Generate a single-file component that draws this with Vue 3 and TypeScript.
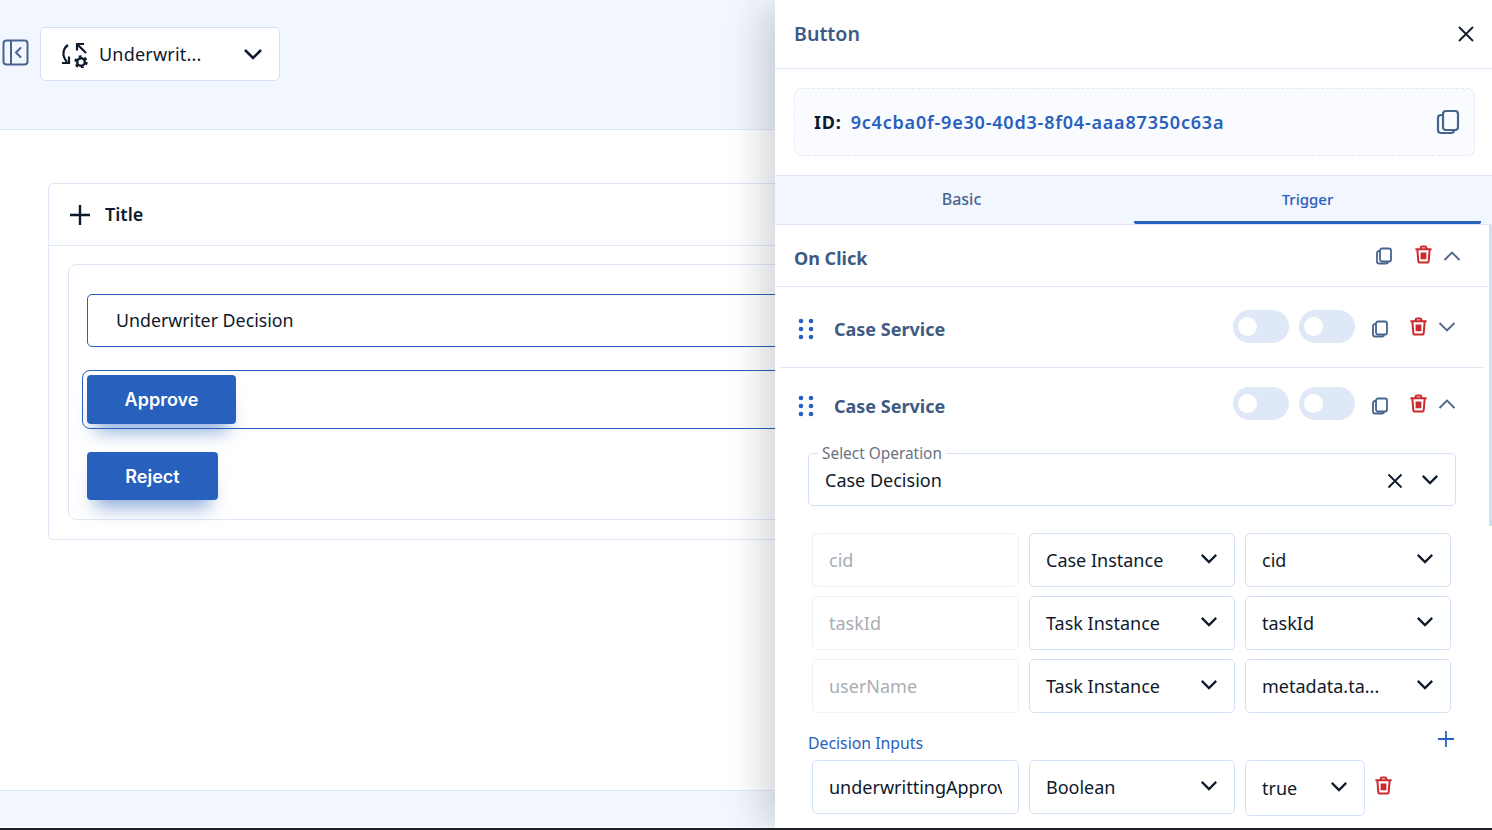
<template>
  <div class="page">
    <header class="topbar">
      <svg class="side-icon" width="30" height="30" viewBox="0 0 30 30" fill="none" stroke="#47648f" stroke-width="2">
        <rect x="3.500" y="3.500" width="24" height="24" rx="3" />
        <path d="M11 3.500v24" />
        <path d="M20.500 11 16 15.500l4.500 4.500" stroke-linecap="round" stroke-linejoin="round" />
      </svg>
      <button class="flow-select">
        <svg width="30" height="28" viewBox="0 0 30 28" fill="none" stroke="#0e1a2b" stroke-width="2.200">
          <path d="M9 5C4.500 8 2 15 8 22" />
          <path d="M3 23h7v-6.500" />
          <path d="M18 4 27 13M18 10.500V4h7" />
          <circle cx="22" cy="22" r="3.800" stroke-width="2.400" />
          <circle cx="22" cy="22" r="5.600" stroke-width="2.200" stroke-dasharray="2.900 2.960" />
        </svg>
        <span class="flow-name">Underwrit...</span>
        <svg class="chev-dark" width="20" height="12" viewBox="0 0 20 12"><path d="M2 2l8 8 8-8" /></svg>
      </button>
    </header>

    <main class="canvas">
      <section class="card">
        <div class="card-head">
          <svg width="22" height="22" viewBox="0 0 22 22" stroke="#0e1a2b" stroke-width="2.400"><path d="M11 1v20M1 11h20" /></svg>
          <span>Title</span>
        </div>
        <div class="card-body">
          <div class="form-box">
            <div class="text-field">Underwriter Decision</div>
            <div class="selected-wrap"><button class="btn btn-approve">Approve</button></div>
            <button class="btn btn-reject">Reject</button>
          </div>
        </div>
      </section>
    </main>

    <footer class="footbar"></footer>

    <aside class="panel">
      <div class="panel-head">
        <h2>Button</h2>
        <svg width="18" height="18" viewBox="0 0 18 18" stroke="#0e1a2b" stroke-width="1.800"><path d="M2 2l14 14M16 2 2 16" /></svg>
      </div>

      <div class="id-wrap">
        <div class="id-box">
          <b>ID:</b>
          <span class="id-val">{{ elementId }}</span>
          <svg class="copy-lg" width="24" height="26" viewBox="0 0 24 26" fill="none" stroke="#47648f" stroke-width="2.200">
            <rect x="7" y="2" width="15" height="19" rx="3" />
            <path d="M7 6H5a3 3 0 0 0-3 3v12a3 3 0 0 0 3 3h10a3 3 0 0 0 3-3" />
          </svg>
        </div>
      </div>

      <div class="tabs">
        <div class="tab tab-basic">Basic</div>
        <div class="tab active">Trigger</div>
      </div>

      <div class="scroll">
        <div class="scrollbar"></div>

        <div class="onclick-row">
          <span class="onclick-title">On Click</span>
          <div class="actions">
            <svg class="copy" viewBox="0 0 18 18" fill="none"><rect x="5" y="1.500" width="11" height="13" rx="2" /><path d="M5 4H4a2 2 0 0 0-2 2v8.500a2 2 0 0 0 2 2h7a2 2 0 0 0 2-2" /></svg>
            <svg class="trash" viewBox="0 0 20 20" fill="none"><path d="M1.500 4.500h17M7 4.500V3a1.500 1.500 0 0 1 1.500-1.500h3A1.500 1.500 0 0 1 13 3v1.500M3.500 4.500l1 12a2 2 0 0 0 2 2h7a2 2 0 0 0 2-2l1-12M8 8v7M12 8v7M10 8v7" /></svg>
            <svg class="chev-soft" viewBox="0 0 18 10"><path d="M1.500 9 9 1.500 16.500 9" /></svg>
          </div>
        </div>

        <div v-for="(svc, i) in services" :key="i" class="svc-row" :class="{ open: svc.open }">
          <svg class="dots" width="16" height="22" viewBox="0 0 16 22" fill="#2860bd">
            <circle v-for="d in dotPoints" :key="d[0] + '-' + d[1]" :cx="d[0]" :cy="d[1]" r="2.300" />
          </svg>
          <span class="svc-title">Case Service</span>
          <div class="toggles">
            <span class="toggle"><i></i></span>
            <span class="toggle"><i></i></span>
          </div>
          <div class="actions svc-actions">
            <svg class="copy" viewBox="0 0 18 18" fill="none"><rect x="5" y="1.500" width="11" height="13" rx="2" /><path d="M5 4H4a2 2 0 0 0-2 2v8.500a2 2 0 0 0 2 2h7a2 2 0 0 0 2-2" /></svg>
            <svg class="trash" viewBox="0 0 20 20" fill="none"><path d="M1.500 4.500h17M7 4.500V3a1.500 1.500 0 0 1 1.500-1.500h3A1.500 1.500 0 0 1 13 3v1.500M3.500 4.500l1 12a2 2 0 0 0 2 2h7a2 2 0 0 0 2-2l1-12M8 8v7M12 8v7M10 8v7" /></svg>
            <svg class="chev-soft" viewBox="0 0 18 10"><path :d="svc.open ? 'M1.500 9 9 1.500 16.500 9' : 'M1.500 1 9 8.500 16.500 1'" /></svg>
          </div>
        </div>

        <fieldset class="op-field">
          <legend>Select Operation</legend>
          <span>Case Decision</span>
          <svg width="16" height="16" viewBox="0 0 16 16" stroke="#0e1a2b" stroke-width="1.800"><path d="M1.500 1.500l13 13M14.500 1.500l-13 13" /></svg>
          <svg class="chev-dark" width="18" height="11" viewBox="0 0 20 12"><path d="M2 2l8 8 8-8" /></svg>
        </fieldset>

        <div class="param-grid">
          <template v-for="p in params" :key="p.name">
            <div class="cell ghost">{{ p.name }}</div>
            <div class="cell">
              <span>{{ p.source }}</span>
              <svg class="chev-dark" width="18" height="11" viewBox="0 0 20 12"><path d="M2 2l8 8 8-8" /></svg>
            </div>
            <div class="cell">
              <span>{{ p.field }}</span>
              <svg class="chev-dark" width="18" height="11" viewBox="0 0 20 12"><path d="M2 2l8 8 8-8" /></svg>
            </div>
          </template>
        </div>

        <div class="inputs-head">
          <span>Decision Inputs</span>
          <svg width="18" height="18" viewBox="0 0 18 18" stroke="#2860bd" stroke-width="1.800"><path d="M9 1v16M1 9h16" /></svg>
        </div>

        <div class="input-row">
          <div class="cell clip"><span>underwrittingApproval</span></div>
          <div class="cell">
            <span>Boolean</span>
            <svg class="chev-dark" width="18" height="11" viewBox="0 0 20 12"><path d="M2 2l8 8 8-8" /></svg>
          </div>
          <div class="cell cell-short">
            <span>true</span>
            <svg class="chev-dark" width="18" height="11" viewBox="0 0 20 12"><path d="M2 2l8 8 8-8" /></svg>
          </div>
          <svg class="trash" viewBox="0 0 20 20" fill="none"><path d="M1.500 4.500h17M7 4.500V3a1.500 1.500 0 0 1 1.500-1.500h3A1.500 1.500 0 0 1 13 3v1.500M3.500 4.500l1 12a2 2 0 0 0 2 2h7a2 2 0 0 0 2-2l1-12M8 8v7M12 8v7M10 8v7" /></svg>
        </div>
      </div>
    </aside>
    <div class="screen-edge"></div>
  </div>
</template>

<script setup lang="ts">
const elementId = '9c4cba0f-9e30-40d3-8f04-aaa87350c63a';

const services = [{ open: false }, { open: true }];

const dotPoints: number[][] = [
  [3, 3], [13, 3],
  [3, 11], [13, 11],
  [3, 19], [13, 19],
];

const params = [
  { name: 'cid', source: 'Case Instance', field: 'cid' },
  { name: 'taskId', source: 'Task Instance', field: 'taskId' },
  { name: 'userName', source: 'Task Instance', field: 'metadata.ta...' },
];
</script>

<style>
html, body { margin: 0; background: #fff; overflow: hidden; }
</style>

<style scoped>
.page {
  --ui: "Noto Sans", "Liberation Sans", sans-serif;
  position: relative;
  width: 1492px;
  height: 830px;
  display: flex;
  flex-direction: column;
  overflow: hidden;
  font-family: var(--ui);
  color: #0e1a2b;
  background: #fff;
}
svg { display: block; flex: none; }

.topbar {
  flex: none;
  box-sizing: content-box;
  background: #f2f6fe;
  border-bottom: 1px solid #dfe8f6;
  display: flex;
  align-items: flex-start;
  padding-top: 27px;
  height: 102px;
  gap: 10px;
}
.side-icon { margin: 10px 0 0 0; }
.flow-select {
  width: 240px;
  height: 54px;
  box-sizing: border-box;
  background: #fff;
  border: 1px solid #d3e1f6;
  border-radius: 5px;
  display: flex;
  align-items: center;
  padding: 0 16px 0 18px;
  font: 18px var(--ui);
  letter-spacing: .2px;
  color: #0e1a2b;
}
.flow-name { margin-left: 10px; flex: 1; text-align: left; padding-bottom: 1px; }
.chev-dark path { fill: none; stroke: #0e1a2b; stroke-width: 2.500; }

.canvas { flex: 1; padding: 53px 0 0 48px; min-height: 0; }
.card {
  width: 1400px;
  height: 357px;
  box-sizing: border-box;
  border: 1px solid #dfe8f6;
  border-radius: 5px;
}
.card-head {
  height: 61px;
  border-bottom: 1px solid #dfe8f6;
  display: flex;
  align-items: center;
  gap: 14px;
  padding-left: 20px;
  font-size: 18px;
  font-weight: 600;
}
.card-head span { padding-bottom: 2px; }
.card-body { padding: 18px 19px 0; }
.form-box {
  height: 256px;
  box-sizing: border-box;
  border: 1px solid #dfe8f6;
  border-radius: 8px;
  padding: 29px 18px 0;
}
.text-field {
  height: 53px;
  box-sizing: border-box;
  border: 1px solid #2860bd;
  border-radius: 5px;
  display: flex;
  align-items: center;
  padding: 0 0 2px 28px;
  font-size: 17.800px;
}
.selected-wrap {
  margin: 23px 0 0 -5px;
  height: 59px;
  box-sizing: border-box;
  border: 1px solid #2860bd;
  border-radius: 8px;
  padding: 4px 0 0 4px;
}
.btn {
  display: block;
  border: 0;
  background: #2860bd;
  color: #fff;
  border-radius: 4px;
  font: 600 18px Inter, "Liberation Sans", sans-serif;
  box-shadow: 0 16px 18px -8px rgba(40, 96, 189, .5);
}
.btn-approve { width: 149px; height: 49px; }
.btn-reject { width: 131px; height: 48px; margin-top: 23px; }

.footbar {
  height: 36px;
  flex: none;
  background: #f2f6fe;
  border-top: 1px solid #dfe8f6;
  margin-bottom: 3px;
  box-sizing: content-box;
}
.screen-edge {
  position: absolute;
  left: 0;
  right: 0;
  bottom: 0;
  height: 2px;
  background: #1e2126;
}

.panel {
  position: absolute;
  top: 0;
  right: 0;
  bottom: 0;
  width: 717px;
  background: #fff;
  box-shadow: -18px 0 36px -6px rgba(30, 40, 60, .2);
  display: flex;
  flex-direction: column;
}
.panel-head {
  height: 68px;
  flex: none;
  border-bottom: 1px solid #dfe8f6;
  display: flex;
  align-items: center;
  justify-content: space-between;
  padding: 0 17px 0 19px;
}
.panel-head h2 { margin: 0 0 2px; font-size: 19.600px; font-weight: 600; color: #3e5a82; }

.id-wrap { padding: 19px 17px 19px 19px; border-bottom: 1px solid #dfe8f6; }
.id-box {
  height: 68px;
  box-sizing: border-box;
  background: #f9fbff;
  border: 1px dashed #dfe8f6;
  border-radius: 8px;
  display: flex;
  align-items: center;
  padding: 0 14px 0 19px;
  font-size: 18px;
  letter-spacing: .8px;
}
.id-box b { font-weight: 700; }
.id-val { margin-left: 9px; flex: 1; color: #2860bd; font-weight: 600; }

.tabs {
  height: 48px;
  flex: none;
  background: #f2f6fe;
  border-bottom: 1px solid #dfe8f6;
  display: grid;
  grid-template-columns: 359px 347px;
}
.tab {
  display: flex;
  align-items: center;
  justify-content: center;
  font-size: 15px;
  font-weight: 500;
  color: #47648f;
}
.tab-basic { font-size: 16px; padding: 0 0 2px 14px; }
.tab.active { color: #2860bd; border-bottom: 3px solid #2860bd; border-radius: 2px; height: 48px; box-sizing: border-box; }

.scroll { position: relative; flex: 1; min-height: 0; overflow: hidden; }
.scrollbar {
  position: absolute;
  top: 0;
  right: 0;
  width: 3px;
  height: 301px;
  background: #d0dff5;
}
.onclick-row {
  height: 61px;
  border-bottom: 1px solid #dfe8f6;
  display: flex;
  align-items: center;
  padding: 0 31px 0 19px;
}
.onclick-title { flex: 1; margin-top: 4px; font-size: 18px; font-weight: 700; color: #3e5a82; }
.actions { display: flex; align-items: center; }
.copy { width: 18px; height: 18px; }
.copy rect, .copy path { stroke: #47648f; stroke-width: 1.800; }
.trash { width: 19px; height: 19px; margin-left: 21px; }
.trash path { stroke: #cb2a2f; stroke-width: 2.100; }
.chev-soft { width: 18px; height: 10px; margin-left: 10px; }
.chev-soft path { fill: none; stroke: #55678a; stroke-width: 1.900; }
.onclick-row .actions { margin-top: 1px; }
.onclick-row .trash { margin-top: -3px; }

.svc-row {
  height: 80px;
  margin: 0 8px 0 5px;
  display: flex;
  align-items: center;
  padding: 0 28px 0 18px;
  border-bottom: 1px solid #dfe8f6;
}
.svc-row.open { border-bottom: 0; height: 72px; }
.dots { margin-top: 4px; }
.svc-title { flex: 1; margin: 4px 0 0 20px; font-size: 18px; font-weight: 700; color: #3e5a82; }
.toggles { display: flex; gap: 10px; margin: 0 16px 2px 0; }
.toggle {
  width: 56px;
  height: 33px;
  border-radius: 17px;
  background: #dfe8f6;
  display: flex;
  align-items: center;
  padding-left: 5px;
  box-sizing: border-box;
}
.toggle i { width: 19px; height: 19px; border-radius: 50%; background: #fff; }
.svc-actions .copy { margin-top: 4px; }
.svc-actions .trash { margin: -2px 0 0 20px; }

.op-field {
  margin: 4px 36px 0 33px;
  padding: 0 16px 7px;
  height: 62px;
  box-sizing: border-box;
  border: 1px solid #d3e1f6;
  border-radius: 5px;
  display: flex;
  align-items: center;
}
.op-field legend {
  padding: 0 4px;
  margin-left: -7px;
  font-size: 15.400px;
  line-height: 19px;
  color: #6b7280;
}
.op-field span { flex: 1; font-size: 18px; padding-bottom: 2px; }
.op-field .chev-dark { margin: -2px 0 0 18px; }

.param-grid {
  margin: 27px 41px 0 37px;
  display: grid;
  grid-template-columns: 207px 206px 206px;
  grid-auto-rows: 54px;
  gap: 9px 10px;
}
.cell {
  box-sizing: border-box;
  height: 54px;
  border: 1px solid #d3e1f6;
  border-radius: 5px;
  display: flex;
  align-items: center;
  justify-content: space-between;
  padding: 0 16px;
  font-size: 18px;
  white-space: nowrap;
}
.cell .chev-dark { margin-top: -3px; }
.cell.ghost { border-color: #edf2fa; color: #a9adb3; }

.inputs-head {
  margin: 11px 37px 0 33px;
  height: 36px;
  display: flex;
  align-items: flex-start;
  justify-content: space-between;
  font-size: 15.800px;
  color: #2860bd;
}
.inputs-head span { margin-top: 8px; }
.inputs-head svg { margin-top: 6px; }

.input-row {
  margin-left: 37px;
  display: flex;
  align-items: flex-start;
  gap: 10px;
}
.input-row .cell { width: 206px; }
.input-row .cell.clip { width: 207px; justify-content: flex-start; }
.cell.clip span { width: 174px; overflow: hidden; }
.input-row .cell.cell-short { width: 120px; height: 56px; }
.input-row > .trash { margin: 16px 0 0 -1px; }
</style>
